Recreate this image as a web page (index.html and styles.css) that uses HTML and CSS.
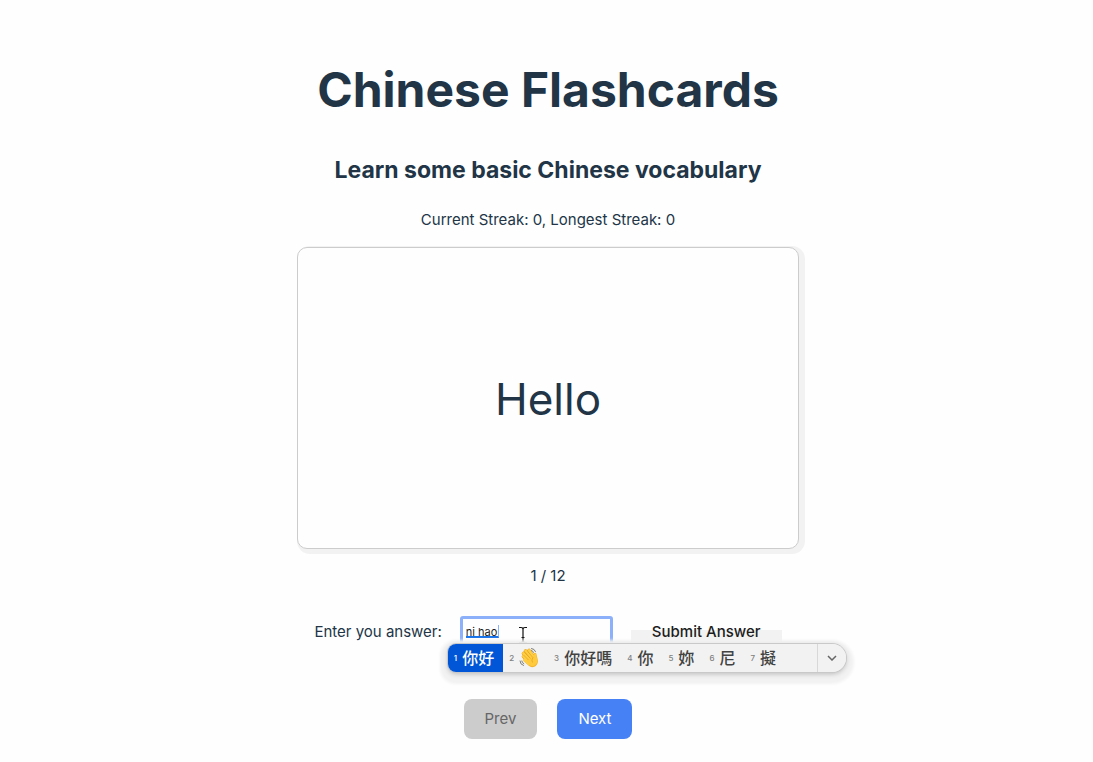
FILE: index.html
```html
<!DOCTYPE html>
<html lang="en">
<head>
<meta charset="utf-8">
<meta name="viewport" content="width=device-width, initial-scale=1">
<title>Chinese Flashcards</title>
<link rel="stylesheet" href="styles.css">
</head>
<body>
<main class="app">
  <h1 class="title">Chinese Flashcards</h1>
  <h2 class="subtitle">Learn some basic Chinese vocabulary</h2>
  <p class="streak">Current Streak: 0, Longest Streak: 0</p>
  <section class="card">Hello</section>
  <p class="counter">1 / 12</p>
  <form class="answer">
    <label class="answer-label" for="guess">Enter you answer:</label>
    <div class="field">
      <input class="answer-input" id="guess" type="text" value="ni hao" autocomplete="off">
      <span class="composition"></span>
      <svg class="pointer" viewBox="0 0 10 18" aria-hidden="true">
        <path d="M1 1.500h2q2 0 2 2q0-2 2-2h2M5 3.500v11M3.500 11.500h3M1 16.500h2q2 0 2-2q0 2 2 2h2"/>
      </svg>
      <div class="ime" lang="zh-Hant">
        <ol class="candidates">
          <li class="candidate selected"><span class="key">1</span>你好</li>
          <li class="candidate"><span class="key">2</span>
            <svg class="wave" viewBox="0 0 20 22" role="img" aria-label="Waving hand">
              <path fill="none" stroke="#7b7b78" stroke-width="1" stroke-linecap="round" d="M12.500 1.500q3 .2 4 3M12.500 3.500q1.500.3 2 1.800M1 14q0 3.500 3.500 4.500M2.800 14q.2 2 2 2.700"/>
              <path fill="none" stroke="#e9a321" stroke-width="3.600" stroke-linecap="round" d="M4.500 9.500l5 5M4.500 6.500l6 6M6.500 4l6 7M10 3.500l5 7"/>
              <path fill="#f4b52c" d="M7 13L14 8.500L15 6.500Q16 4.800 17.300 6.500L18.600 12Q20 17 16 19.500Q12.500 21.500 9.500 18.500L4.500 14Q3.600 12 5.500 11.500Z"/>
              <path fill="none" stroke="#ffcf42" stroke-width="2.500" stroke-linecap="round" d="M4.300 9.200l5 5M4.300 6.200l6 6M6.500 3.700l6 7M10 3.300l4.500 7M5.300 13l5 4"/>
              <path fill="#ffcb3c" d="M7 13L14.500 9L15.500 7Q16.200 6 17 7L18 12Q19 16.500 15.500 18.500Q12.500 20 10 17.500Z"/>
              <path fill="none" stroke="#dc931c" stroke-width=".6" d="M4.500 8l5 5M6 5.500l5.500 6M8.800 4.500l5 6M14 10.500q-2 2.500-.5 5"/>
            </svg>
          </li>
          <li class="candidate"><span class="key">3</span>你好嗎</li>
          <li class="candidate"><span class="key">4</span>你</li>
          <li class="candidate"><span class="key">5</span>妳</li>
          <li class="candidate"><span class="key">6</span>尼</li>
          <li class="candidate"><span class="key">7</span>擬</li>
        </ol>
        <button class="expand" type="button" aria-label="More candidates">
          <svg class="chevron" viewBox="0 0 10 6" aria-hidden="true"><path d="M1 1l4 4l4-4"/></svg>
        </button>
      </div>
    </div>
    <button class="submit" type="submit">Submit Answer</button>
  </form>
  <nav class="pager">
    <button class="page-button" type="button" disabled>Prev</button>
    <button class="page-button" type="button">Next</button>
  </nav>
</main>
</body>
</html>
```
FILE: styles.css
```css
* { box-sizing: border-box; }

body {
  margin: 0;
  background: #fefefe;
  color: #213547;
  font: 16px/24px Inter, "Liberation Sans", "Noto Sans CJK TC", sans-serif;
}

.app {
  display: flex;
  flex-direction: column;
  align-items: center;
  padding: 60px 0 20px 3px;
  text-align: center;
}

.title {
  margin: 0;
  font-size: 48px;
  line-height: 60px;
  font-weight: 700;
}

.subtitle {
  margin: 32px 0 20px;
  font-size: 23px;
  line-height: 36px;
  font-weight: 700;
}

.streak, .counter { margin: 0; font-size: 15px; }

.card {
  display: flex;
  align-items: center;
  justify-content: center;
  width: 100%;
  max-width: 502px;
  min-height: 302px;
  margin: 15px 0;
  padding-top: 2px;
  border: 1px solid #cccccc;
  border-radius: 10px;
  background: #fefefe;
  box-shadow: 3px 2px 0 3px #f2f2f2;
  font-size: 44px;
  line-height: 56px;
}

.answer {
  display: flex;
  align-items: center;
  gap: 18px;
  margin: 24px 0 0;
}

.answer-label { font-size: 15px; }

.field { position: relative; width: 153px; }

.answer-input {
  display: block;
  width: 100%;
  height: 32px;
  padding: 0 3px;
  border: 3px solid #8cb0fa;
  border-radius: 3px;
  outline: 0;
  background: #fefefe;
  color: #1c1c1c;
  font: 11px/16px Inter, "Liberation Sans", sans-serif;
}

.composition {
  position: absolute;
  top: 9px;
  left: 6px;
  width: 33px;
  height: 13px;
  border-right: 1px solid #8cb0fa;
  border-bottom: 2px solid #1672e8;
}

.pointer {
  position: absolute;
  top: 10px;
  left: 58px;
  width: 10px;
  height: 18px;
  fill: none;
  stroke: #111111;
  stroke-width: 1.2;
}

.ime {
  position: absolute;
  z-index: 1;
  top: 28px;
  left: -12px;
  display: flex;
  width: 398px;
  height: 28px;
  border-radius: 8px 14px 14px 8px;
  background: #f2f2f2;
  box-shadow: 0 0 0 1px #c9c9c9, 0 2px 5px #bbbbbb, 0 4px 3px 8px #f2f2f2;
  color: #424242;
  font: 500 16px/28px Inter, "Noto Sans CJK TC", sans-serif;
}

.candidates {
  display: flex;
  flex: 1;
  margin: 0;
  padding: 0;
  list-style: none;
}

.candidate {
  display: flex;
  align-items: center;
  gap: 5px;
  padding: 0 9px 0 6px;
  white-space: nowrap;
}

.selected {
  border-radius: 8px 0 0 8px;
  background: #0056d6;
  color: #ffffff;
}

.key { color: #808080; font-size: 8px; }

.selected .key { color: #ffffff; }

.wave { width: 20px; height: 22px; }

.expand {
  display: flex;
  align-items: center;
  justify-content: center;
  width: 29px;
  padding: 0;
  border: 0;
  border-left: 1px solid #d8d8d8;
  border-radius: 0 14px 14px 0;
  background: #f2f2f2;
}

.chevron {
  width: 10px;
  height: 6px;
  fill: none;
  stroke: #666666;
  stroke-width: 1.5;
}

.submit {
  height: 40px;
  padding: 0 21px;
  border: 0;
  border-radius: 8px;
  background: linear-gradient(#fefefe 18px, #f2f2f2 18px);
  color: #1c1c1c;
  font: 500 15px/20px Inter, "Liberation Sans", sans-serif;
}

.pager { display: flex; gap: 20px; margin-top: 47px; }

.page-button {
  height: 40px;
  padding: 0 21px;
  border: 0;
  border-radius: 8px;
  background: #4781f6;
  color: #ffffff;
  font: 15px/20px Inter, "Liberation Sans", sans-serif;
}

.page-button:disabled { background: #cccccc; color: #666666; }
```
